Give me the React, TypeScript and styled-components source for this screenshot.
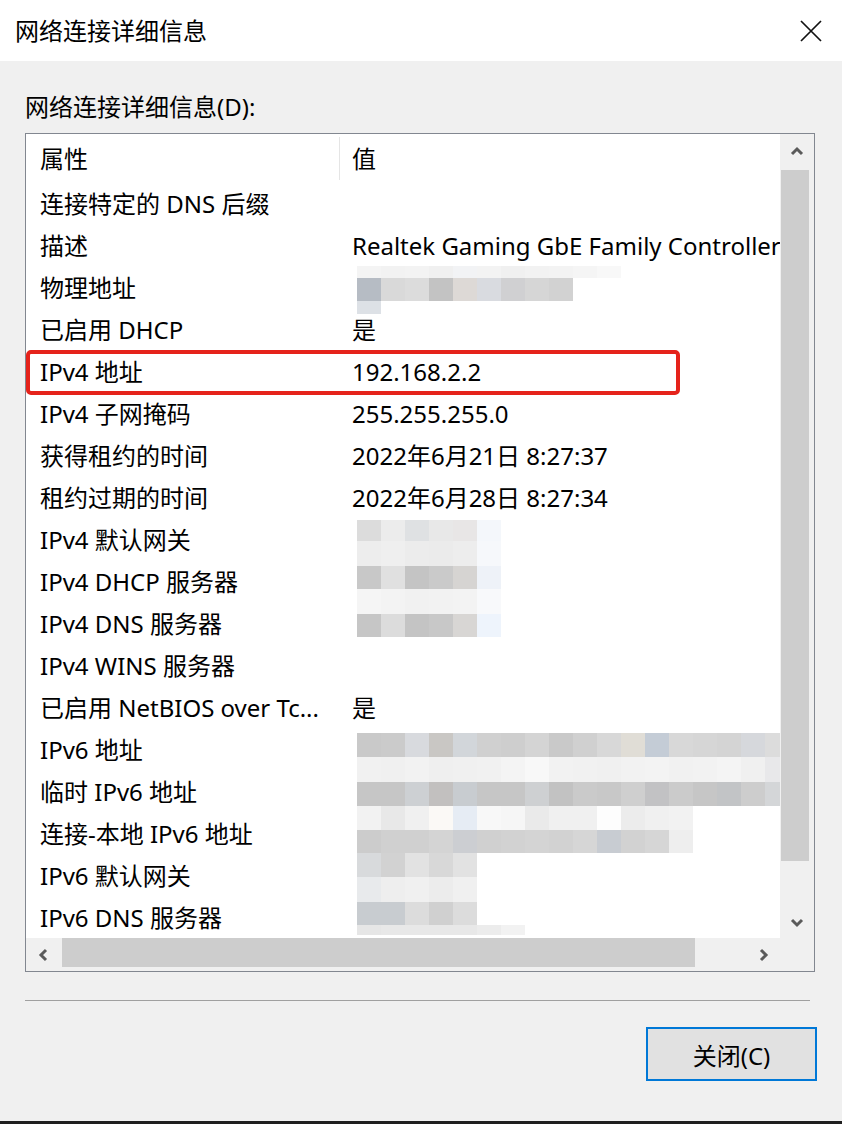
import styled, { createGlobalStyle } from "styled-components";

const GlobalStyle = createGlobalStyle`
  html, body {
    margin: 0;
    padding: 0;
  }
  body {
    background: #f0f0f0;
    font-family: "Noto Sans", "Noto Sans CJK SC", sans-serif;
    color: #000;
  }
`;

const Window = styled.div`
  width: 842px;
  height: 1124px;
  display: flex;
  flex-direction: column;
  overflow: hidden;
  background: #f0f0f0;
`;

const TitleBar = styled.div`
  height: 61px;
  flex-shrink: 0;
  background: #fff;
  display: flex;
  align-items: center;
  justify-content: space-between;
  padding: 0 20px 0 15px;
  font-size: 24px;
  line-height: 30px;
`;

const Body = styled.div`
  flex: 1;
  display: flex;
  flex-direction: column;
  padding: 31px 27px 0 25px;
`;

const GroupLabel = styled.div`
  font-size: 24px;
  line-height: 30px;
  margin-bottom: 11px;
`;

const ListBox = styled.div`
  box-sizing: border-box;
  height: 839px;
  border: 1px solid #828790;
  background: #fff;
  display: grid;
  grid-template-columns: 754px 34px;
  grid-template-rows: 804px 33px;
`;

const Content = styled.div`
  position: relative;
  overflow: hidden;
  background: #fff;
`;

const Header = styled.div`
  height: 49px;
  display: flex;
  align-items: center;
  font-size: 24px;
  line-height: 30px;
`;

const HeaderCell = styled.div<{ $divider?: boolean }>`
  box-sizing: border-box;
  height: 43px;
  display: flex;
  align-items: center;
  width: ${(p) => (p.$divider ? "314px" : "auto")};
  padding-left: ${(p) => (p.$divider ? "14px" : "12px")};
  border-right: ${(p) => (p.$divider ? "1px solid #e5e5e5" : "none")};
`;

const Row = styled.div`
  height: 42px;
  display: flex;
  align-items: center;
  font-size: 24px;
  line-height: 30px;
  white-space: nowrap;
`;

const NameCell = styled.div`
  box-sizing: border-box;
  width: 314px;
  flex-shrink: 0;
  padding-left: 14px;
`;

const ValueCell = styled.div`
  padding-left: 12px;
  flex-shrink: 0;
`;

const Highlight = styled.div`
  position: absolute;
  left: 0;
  top: 216px;
  width: 654px;
  height: 45px;
  box-sizing: border-box;
  border: 4px solid #e5231b;
  border-radius: 5px;
`;

const Mosaic = styled.div<{ $left: number; $top: number }>`
  position: absolute;
  left: ${(p) => p.$left}px;
  top: ${(p) => p.$top}px;
  display: flex;
  flex-direction: column;
  filter: blur(0.4px);
`;

const MosaicRow = styled.div<{ $h: number }>`
  display: flex;
  height: ${(p) => p.$h}px;
`;

const MosaicCell = styled.div<{ $c: string }>`
  width: 24px;
  height: 100%;
  background: ${(p) => p.$c};
`;

const VScroll = styled.div`
  grid-column: 2;
  grid-row: 1;
  background: #f0f0f0;
  display: flex;
  flex-direction: column;
`;

const HScroll = styled.div`
  grid-column: 1;
  grid-row: 2;
  background: #f0f0f0;
  display: flex;
`;

const Corner = styled.div`
  grid-column: 2;
  grid-row: 2;
  background: #f0f0f0;
`;

const ArrowButton = styled.div<{ $w?: number; $h?: number }>`
  flex-shrink: 0;
  width: ${(p) => (p.$w ? `${p.$w}px` : "auto")};
  height: ${(p) => (p.$h ? `${p.$h}px` : "auto")};
  display: flex;
  align-items: center;
  justify-content: center;
`;

const VThumb = styled.div`
  width: 28px;
  height: 691px;
  margin-left: 1px;
  background: #cdcdcd;
`;

const HThumb = styled.div`
  width: 633px;
  height: 29px;
  background: #cdcdcd;
`;

const Track = styled.div`
  flex: 1;
`;

const Separator = styled.div`
  margin-top: 28px;
  width: 785px;
  height: 1px;
  background: #a0a0a0;
`;

const ButtonRow = styled.div`
  display: flex;
  justify-content: flex-end;
  margin-top: 26px;
  margin-right: -2px;
`;

const CloseButton = styled.button`
  width: 171px;
  height: 54px;
  box-sizing: border-box;
  border: 2px solid #0078d7;
  background: #e1e1e1;
  font-family: inherit;
  font-size: 24px;
  color: #000;
  padding: 0;
`;

const BottomEdge = styled.div`
  height: 3px;
  flex-shrink: 0;
  background: #1f1f1f;
`;

const Chevron = ({ dir }: { dir: "up" | "down" | "left" | "right" }) => {
  const pts = {
    up: "3,10 8,5 13,10",
    down: "3,6 8,11 13,6",
    left: "10,3 5,8 10,13",
    right: "6,3 11,8 6,13",
  }[dir];
  return (
    <svg width="16" height="16" viewBox="0 0 16 16">
      <polyline points={pts} fill="none" stroke="#5a5a5a" strokeWidth="3" />
    </svg>
  );
};

const rows: [string, string][] = [
  ["连接特定的 DNS 后缀", ""],
  ["描述", "Realtek Gaming GbE Family Controller"],
  ["物理地址", ""],
  ["已启用 DHCP", "是"],
  ["IPv4 地址", "192.168.2.2"],
  ["IPv4 子网掩码", "255.255.255.0"],
  ["获得租约的时间", "2022年6月21日 8:27:37"],
  ["租约过期的时间", "2022年6月28日 8:27:34"],
  ["IPv4 默认网关", ""],
  ["IPv4 DHCP 服务器", ""],
  ["IPv4 DNS 服务器", ""],
  ["IPv4 WINS 服务器", ""],
  ["已启用 NetBIOS over Tc...", "是"],
  ["IPv6 地址", ""],
  ["临时 IPv6 地址", ""],
  ["连接-本地 IPv6 地址", ""],
  ["IPv6 默认网关", ""],
  ["IPv6 DNS 服务器", ""],
];

type Block = { left: number; top: number; rows: { h: number; cells: string[] }[] };

// redaction blocks, coordinates relative to the list content area
const mosaics: Block[] = [
  {
    left: 331,
    top: 132,
    rows: [
      { h: 12, cells: ["#f4f4f4", "#f2f2f2", "#f3f3f3", "#f0f0f0", "#f2f3f5", "#f3f3f3", "#f0f0f0", "#f2f2f2", "#f3f3f3", "#f5f5f5", "#f8f8f8"] },
      { h: 23, cells: ["#b6bcc4", "#d9d9d9", "#dcdcdc", "#c3c3c3", "#ddd9d6", "#d9dbe0", "#d0d0d2", "#d6d6d6", "#d2d2d2"] },
      { h: 13, cells: ["#dde1e6"] },
    ],
  },
  {
    left: 331,
    top: 386,
    rows: [
      { h: 21, cells: ["#dcdcdc", "#ececec", "#dfe1e3", "#e8e8e8", "#e8e6e6", "#f4f7fb"] },
      { h: 25, cells: ["#ededed", "#efefef", "#ececec", "#ebebeb", "#ededed", "#f6f8fb"] },
      { h: 23, cells: ["#c8c8c8", "#e0e0e0", "#c4c4c4", "#cacaca", "#d6d4d2", "#eef2f8"] },
      { h: 25, cells: ["#f5f5f5", "#f3f3f3", "#f1f1f1", "#f2f2f2", "#f3f3f3", "#f8f9fb"] },
      { h: 23, cells: ["#c6c6c6", "#dcdcdc", "#c4c4c4", "#c8c8c8", "#d8d6d4", "#eef4fc"] },
    ],
  },
  {
    left: 331,
    top: 599,
    rows: [
      { h: 24, cells: ["#c9c9c9", "#cbcbcb", "#d8dade", "#c9c7c4", "#d2d6da", "#d0d0d0", "#cecece", "#d4d4d4", "#c9c9c9", "#d0d0d0", "#d8d8d8", "#e0ddd6", "#c4ccd6", "#d8d8d8", "#d6d6d6", "#d4d4d4", "#d6d8dc", "#dcdcdc"] },
      { h: 25, cells: ["#f1f1f1", "#f0f0f0", "#f2f2f2", "#efefef", "#f0f0f0", "#f1f1f1", "#f4f4f4", "#f8f8f8", "#f2f2f2", "#f1f1f1", "#f0f0f0", "#f2f2f2", "#f3f3f3", "#f1f1f1", "#f2f2f2", "#f4f4f4", "#f0f0f0", "#e8e8ea"] },
      { h: 24, cells: ["#c6c6c6", "#c6c6c6", "#cdd0d3", "#c2c0bf", "#c8ccd0", "#c6c6c6", "#c6c6c6", "#ced0d2", "#c2c2c2", "#cacaca", "#c8c8c8", "#cfcfcf", "#c2c2c4", "#cbcbcb", "#c6c6c6", "#c2c4c6", "#cdcdcd", "#d4d6d8"] },
      { h: 24, cells: ["#f2f2f2", "#e8e8e8", "#f0f0f0", "#fbf9f6", "#e6ecf4", "#f8f8f8", "#f6f6f6", "#eaeaea", "#f0f0f0", "#f0f0f0", "#fdfdfd", "#ececec", "#f0f0f0", "#f2f2f2"] },
      { h: 23, cells: ["#cccccc", "#d0d0d0", "#d0d0d0", "#d4d4d4", "#ccced2", "#d0d0d0", "#d2d2d2", "#d4d4d4", "#d2d2d2", "#d6d6d6", "#c8ccd2", "#d2d2d2", "#d6d6d6", "#eeeeee"] },
      { h: 24, cells: ["#d8dadc", "#d2d2d2", "#e2e2e2", "#d8d8d8", "#e2e2e2"] },
      { h: 25, cells: ["#e8eaec", "#eeeeee", "#f0f0f0", "#ececec", "#f0f0f0"] },
      { h: 23, cells: ["#c8ccd0", "#c8ccd0", "#dcdcdc", "#d0d0d0", "#dcdcdc"] },
      { h: 10, cells: ["#e6e6e6", "#e8e8e8", "#e8e8e8", "#e8e8e8", "#e8e8e8", "#ececec", "#f2f2f2"] },
    ],
  },
];

const CloseIcon = () => (
  <svg width="22" height="22" viewBox="0 0 22 22">
    <path d="M1 1 L21 21 M21 1 L1 21" stroke="#111" strokeWidth="1.7" fill="none" />
  </svg>
);

export default function App() {
  return (
    <>
      <GlobalStyle />
      <Window>
        <TitleBar>
          <span>网络连接详细信息</span>
          <CloseIcon />
        </TitleBar>
        <Body>
          <GroupLabel>网络连接详细信息(D):</GroupLabel>
          <ListBox>
            <Content>
              <Header>
                <HeaderCell $divider>属性</HeaderCell>
                <HeaderCell>值</HeaderCell>
              </Header>
              {rows.map(([name, value]) => (
                <Row key={name}>
                  <NameCell>{name}</NameCell>
                  <ValueCell>{value}</ValueCell>
                </Row>
              ))}
              {mosaics.map((b, i) => (
                <Mosaic key={i} $left={b.left} $top={b.top}>
                  {b.rows.map((r, j) => (
                    <MosaicRow key={j} $h={r.h}>
                      {r.cells.map((c, k) => (
                        <MosaicCell key={k} $c={c} />
                      ))}
                    </MosaicRow>
                  ))}
                </Mosaic>
              ))}
              <Highlight />
            </Content>
            <VScroll>
              <ArrowButton $h={36}>
                <Chevron dir="up" />
              </ArrowButton>
              <VThumb />
              <Track />
              <ArrowButton $h={33}>
                <Chevron dir="down" />
              </ArrowButton>
            </VScroll>
            <HScroll>
              <ArrowButton $w={36}>
                <Chevron dir="left" />
              </ArrowButton>
              <HThumb />
              <Track />
              <ArrowButton $w={35}>
                <Chevron dir="right" />
              </ArrowButton>
            </HScroll>
            <Corner />
          </ListBox>
          <Separator />
          <ButtonRow>
            <CloseButton>关闭(C)</CloseButton>
          </ButtonRow>
        </Body>
        <BottomEdge />
      </Window>
    </>
  );
}
